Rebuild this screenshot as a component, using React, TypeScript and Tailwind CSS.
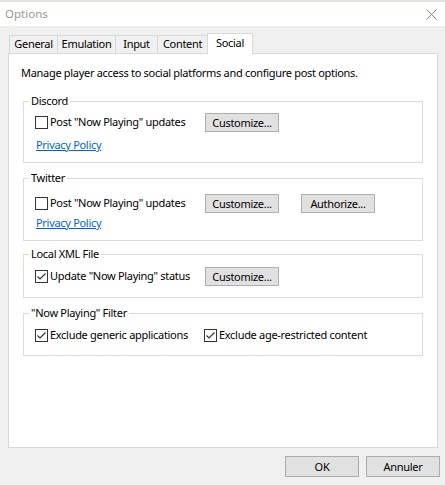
import React from 'react';

const font = { fontFamily: '"Noto Sans", "Open Sans", sans-serif' };

// Windows-style checkbox, 13x13
const CheckBox = ({ checked }: { checked?: boolean }) => (
  <span className="flex h-[13px] w-[13px] shrink-0 items-center justify-center border border-[#333333] bg-white">
    {checked && (
      <svg width="11" height="11" viewBox="0 0 11 11">
        <path d="M1.5 5.5 L4 8 L9.5 2.5" fill="none" stroke="#333333" strokeWidth="1.2" />
      </svg>
    )}
  </span>
);

const Button = ({ label, className = '' }: { label: string; className?: string }) => (
  <button
    className={`flex h-[19px] w-[74px] items-center justify-center border border-[#adadad] bg-[#e1e1e1] leading-none text-black ${className}`}
  >
    {label}
  </button>
);

const Check = ({ checked, label, width = 'w-[170px]' }: { checked?: boolean; label: string; width?: string }) => (
  <div className={`flex items-center gap-[2px] ${width}`}>
    <CheckBox checked={checked} />
    <span className="whitespace-nowrap">{label}</span>
  </div>
);

const Group = ({
  title,
  className = '',
  children,
}: {
  title: string;
  className?: string;
  children: React.ReactNode;
}) => (
  <fieldset className={`mx-[14px] border border-[#dcdcdc] ${className}`}>
    <legend className="ml-[5px] px-[2px] leading-4">{title}</legend>
    <div className="pl-[11px]">{children}</div>
  </fieldset>
);

const Link = () => (
  <div className="ml-[1px] leading-4">
    <span className="text-[#0066cc] underline">Privacy Policy</span>
  </div>
);

const tabs = [
  { name: 'General', w: 'w-[49px]' },
  { name: 'Emulation', w: 'w-[59px]' },
  { name: 'Input', w: 'w-[43px]' },
  { name: 'Content', w: 'w-[51px]' },
];

export default function App() {
  return (
    <div
      className="flex h-[485px] w-[445px] flex-col bg-[#f0f0f0] text-[11px] tracking-[-0.3px] text-black"
      style={font}
    >
      <div className="h-[2px] bg-[#e6e3de]" />
      {/* title bar */}
      <div className="flex h-[24px] items-center justify-between bg-white pl-[5px] pr-[8px]">
        <span className="text-[11.5px] tracking-normal text-[#999999]">Options</span>
        <svg width="11" height="11" viewBox="0 0 11 11">
          <path d="M0.5 0.5 L10.5 10.5 M10.5 0.5 L0.5 10.5" stroke="#8a8a8a" strokeWidth="1" />
        </svg>
      </div>

      {/* tabs */}
      <div className="mt-[7px] flex h-[20px] items-end pl-[9px]">
        {tabs.map((t) => (
          <div
            key={t.name}
            className={`-mr-px flex h-[18px] items-center justify-center border border-b-0 border-[#d9d9d9] bg-[#f0f0f0] ${t.w}`}
          >
            {t.name}
          </div>
        ))}
        <div className="relative z-10 -mb-px flex h-[21px] w-[46px] items-start justify-center border border-b-0 border-[#d9d9d9] bg-white pt-[1px]">
          Social
        </div>
      </div>

      {/* panel */}
      <div className="mx-[8px] mr-[7px] h-[395px] border border-[#d9d9d9] bg-white">
        <p className="mt-[11px] ml-[12px] leading-4">
          Manage player access to social platforms and configure post options.
        </p>

        <Group title="Discord" className="mt-[12px] pb-[9px]">
          <div className="mt-[4px] flex h-[19px] items-center">
            <Check label={'Post "Now Playing" updates'} />
            <Button label="Customize..." />
          </div>
          <div className="mt-[5px]">
            <Link />
          </div>
        </Group>

        <Group title="Twitter" className="mt-[7px] pb-[9px]">
          <div className="mt-[8px] flex h-[19px] items-center">
            <Check label={'Post "Now Playing" updates'} />
            <Button label="Customize..." />
            <Button label="Authorize..." className="ml-[22px]" />
          </div>
          <div className="mt-[2px]">
            <Link />
          </div>
        </Group>

        <Group title="Local XML File" className="mt-[5px] pb-[11px]">
          <div className="mt-[5px] flex h-[19px] items-center">
            <Check checked label={'Update "Now Playing" status'} />
            <Button label="Customize..." />
          </div>
        </Group>

        <Group title={'"Now Playing" Filter'} className="mt-[7px] pb-[10px]">
          <div className="mt-[5px] flex h-[19px] items-center">
            <Check checked label="Exclude generic applications" width="w-[169px]" />
            <Check checked label="Exclude age-restricted content" width="w-auto" />
          </div>
        </Group>
      </div>

      {/* dialog buttons */}
      <div className="mt-[8px] flex justify-end gap-[7px] pr-[5px]">
        <button className="h-[21px] w-[74px] border border-[#adadad] bg-[#e1e1e1] leading-none">OK</button>
        <button className="h-[21px] w-[74px] border border-[#adadad] bg-[#e1e1e1] leading-none">Annuler</button>
      </div>
    </div>
  );
}
